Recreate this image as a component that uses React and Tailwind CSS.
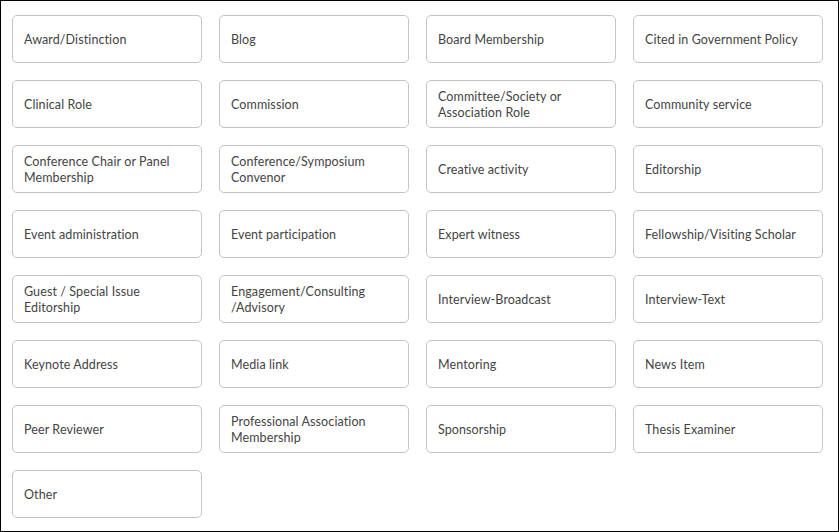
const ITEMS = [
  'Award/Distinction',
  'Blog',
  'Board Membership',
  'Cited in Government Policy',
  'Clinical Role',
  'Commission',
  'Committee/Society or Association Role',
  'Community service',
  'Conference Chair or Panel Membership',
  'Conference/Symposium Convenor',
  'Creative activity',
  'Editorship',
  'Event administration',
  'Event participation',
  'Expert witness',
  'Fellowship/Visiting Scholar',
  'Guest / Special Issue Editorship',
  'Engagement/Consulting /Advisory',
  'Interview-Broadcast',
  'Interview-Text',
  'Keynote Address',
  'Media link',
  'Mentoring',
  'News Item',
  'Peer Reviewer',
  'Professional Association Membership',
  'Sponsorship',
  'Thesis Examiner',
  'Other',
];

export default function App() {
  return (
    <div className="w-[839px] h-[532px] border border-black bg-white pl-[11px] pt-[14px] font-['Lato',sans-serif]">
      <div className="grid grid-cols-[repeat(4,190px)] gap-x-[17px] gap-y-[17px]">
        {ITEMS.map((label) => (
          <button
            key={label}
            className="h-[48px] rounded-[5px] border border-[#c4c4c4] bg-white px-[11px] pt-[2px] text-left text-[12.5px] leading-[16px] tracking-[0.1px] text-[#444]"
          >
            {label}
          </button>
        ))}
      </div>
    </div>
  );
}
